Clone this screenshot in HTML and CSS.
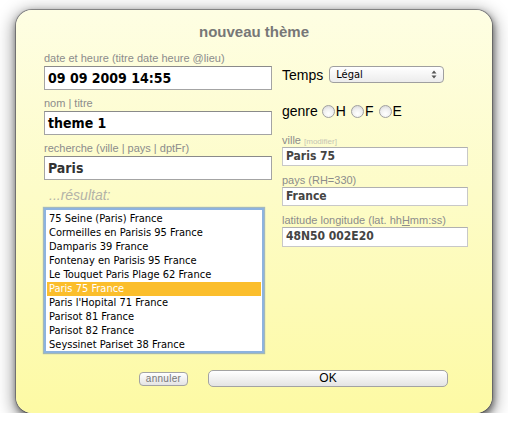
FILE: index.html
```html
<!DOCTYPE html>
<html lang="fr">
<head>
<meta charset="utf-8">
<title>nouveau thème</title>
<link rel="stylesheet" href="styles.css">
</head>
<body>
<div class="dialog">
  <h1 class="title">nouveau thème</h1>
  <div class="cols">
    <div class="col-left">
      <div class="label">date et heure (titre date heure @lieu)</div>
      <div class="field big">09 09 2009 14:55</div>
      <div class="label gap">nom | titre</div>
      <div class="field big">theme 1</div>
      <div class="label gap">recherche (ville | pays | dptFr)</div>
      <div class="field big gray">Paris</div>
      <div class="result">...résultat:</div>
      <div class="list">
        <div class="item">75 Seine (Paris) France</div>
        <div class="item">Cormeilles en Parisis 95 France</div>
        <div class="item">Damparis 39 France</div>
        <div class="item">Fontenay en Parisis 95 France</div>
        <div class="item">Le Touquet Paris Plage 62 France</div>
        <div class="item sel">Paris 75 France</div>
        <div class="item">Paris l'Hopital 71 France</div>
        <div class="item">Parisot 81 France</div>
        <div class="item">Parisot 82 France</div>
        <div class="item">Seyssinet Pariset 38 France</div>
      </div>
    </div>
    <div class="col-right">
      <div class="row temps">
        <span class="rlabel">Temps</span>
        <div class="select">
          <span>Légal</span>
          <svg class="arrows" width="6" height="9" viewBox="0 0 6 9"><path d="M3 0.5 L5.5 3.5 H0.5 Z M3 8.5 L5.5 5.5 H0.5 Z" fill="#555"/></svg>
        </div>
      </div>
      <div class="row genre">
        <span class="rlabel">genre</span>
        <span class="radio"></span><span class="rtext">H</span>
        <span class="radio"></span><span class="rtext">F</span>
        <span class="radio"></span><span class="rtext">E</span>
      </div>
      <div class="label ville">ville <span class="tiny">[modifier]</span></div>
      <div class="field small">Paris 75</div>
      <div class="label gap2">pays (RH=330)</div>
      <div class="field small">France</div>
      <div class="label gap2">latitude longitude (lat. hh<u>H</u>mm:ss)</div>
      <div class="field small last">48N50 002E20</div>
    </div>
  </div>
  <div class="buttons">
    <button class="btn cancel">annuler</button>
    <button class="btn ok">OK</button>
  </div>
</div>
</body>
</html>
```
FILE: styles.css
```css
html, body {
  margin: 0;
  padding: 0;
  background: #ffffff;
}
body {
  padding: 10px 16px 0 16px;
  font-family: "Liberation Sans", Arial, sans-serif;
}
.dialog {
  box-sizing: border-box;
  width: 476px;
  height: 403px;
  border-radius: 16px;
  background: linear-gradient(to bottom, #fefee3 0%, #fdfcc8 45%, #fdfaa4 100%);
  box-shadow: 0 0 0 1px rgba(70,70,70,0.5), 1px 3px 6px 1px rgba(0,0,0,0.45), 0 4px 16px 4px rgba(0,0,0,0.35);
  padding: 13px 0 0 28px;
}
.title {
  margin: 0;
  margin-left: -28px;
  font-size: 15px;
  line-height: 18px;
  font-weight: bold;
  color: #777;
  text-align: center;
}
.cols {
  display: grid;
  grid-template-columns: 228px 186px;
  column-gap: 10px;
  margin-top: 11px;
}
.col-left, .col-right {
  display: flex;
  flex-direction: column;
}
.label {
  font-size: 11px;
  line-height: 13px;
  height: 13px;
  color: #8c8c8c;
  white-space: nowrap;
}
.label.gap { margin-top: 7px; }
.label.gap2 { margin-top: 8px; }
.label u { text-decoration: underline; }
.tiny {
  font-size: 8px;
  color: #c4c4b4;
}
.field {
  box-sizing: border-box;
  background: #fff;
  border: 1px solid #a4a4a4;
  border-top-color: #8a8a8a;
  font-family: "DejaVu Sans Condensed", "DejaVu Sans", sans-serif;
  font-weight: bold;
  white-space: nowrap;
  overflow: hidden;
}
.field.big {
  height: 24px;
  margin-top: 1px;
  font-size: 14px;
  line-height: 22px;
  padding-left: 3px;
  color: #000;
}
.field.big.gray { color: #333; }
.field.small {
  height: 19px;
  font-size: 12px;
  line-height: 17px;
  padding-left: 3px;
  color: #444;
  border-color: #c8c8c8;
  border-top-color: #b0b0b0;
}
.field.small.last { height: 20px; }
.result {
  margin-top: 7px;
  height: 16px;
  line-height: 16px;
  font-size: 14px;
  font-style: italic;
  color: #b3b3a8;
  padding-left: 5px;
}
.list {
  box-sizing: border-box;
  margin-top: 5px;
  width: 220px;
  height: 145px;
  background: #fff;
  border: 2px solid #8db3df;
  box-shadow: 0 0 1px 1px rgba(90,130,185,0.55);
  padding: 2px 1px;
}
.item {
  height: 14px;
  line-height: 14px;
  font-family: "DejaVu Sans Condensed", "DejaVu Sans", sans-serif;
  font-size: 11px;
  color: #000;
  padding-left: 2px;
  white-space: nowrap;
}
.item.sel {
  background: #fbbe2c;
  color: #fff;
}
.row {
  display: flex;
  align-items: center;
}
.rlabel {
  font-size: 14px;
  color: #000;
}
.temps {
  margin-top: 14px;
  height: 17px;
}
.select {
  box-sizing: border-box;
  margin-left: 6px;
  width: 115px;
  height: 17px;
  border: 1px solid #9f9f9f;
  border-radius: 4px;
  background: linear-gradient(to bottom, #ffffff, #ececec);
  display: flex;
  align-items: center;
  justify-content: space-between;
  padding: 0 6px 0 6px;
  font-family: "DejaVu Sans Condensed", "DejaVu Sans", sans-serif;
  font-size: 11px;
  color: #000;
}
.genre {
  margin-top: 19px;
  height: 18px;
}
.radio {
  box-sizing: border-box;
  width: 13px;
  height: 13px;
  border-radius: 50%;
  border: 1px solid #a0a0a0;
  background: radial-gradient(circle at 50% 70%, #ffffff 0%, #f0f0f0 50%, #cfcfcf 100%);
  margin-left: 5px;
  margin-right: 1px;
}
.genre .rlabel + .radio { margin-left: 4px; }
.rtext {
  font-size: 14px;
  color: #000;
}
.ville { margin-top: 14px; }
.buttons {
  display: flex;
  align-items: center;
  margin-top: 17px;
  margin-left: 95px;
  height: 17px;
  gap: 20px;
}
.btn {
  box-sizing: border-box;
  margin: 0;
  padding: 0;
  font-family: "Liberation Sans", Arial, sans-serif;
  border: 1px solid #a3a3a3;
  background: linear-gradient(to bottom, #ffffff, #e4e4e4);
}
.cancel {
  width: 49px;
  height: 14px;
  border-radius: 4px;
  font-size: 10px;
  line-height: 12px;
  letter-spacing: 0.3px;
  color: #777;
}
.ok {
  width: 240px;
  height: 17px;
  border-radius: 5px;
  font-size: 12px;
  line-height: 15px;
  color: #000;
}
```
